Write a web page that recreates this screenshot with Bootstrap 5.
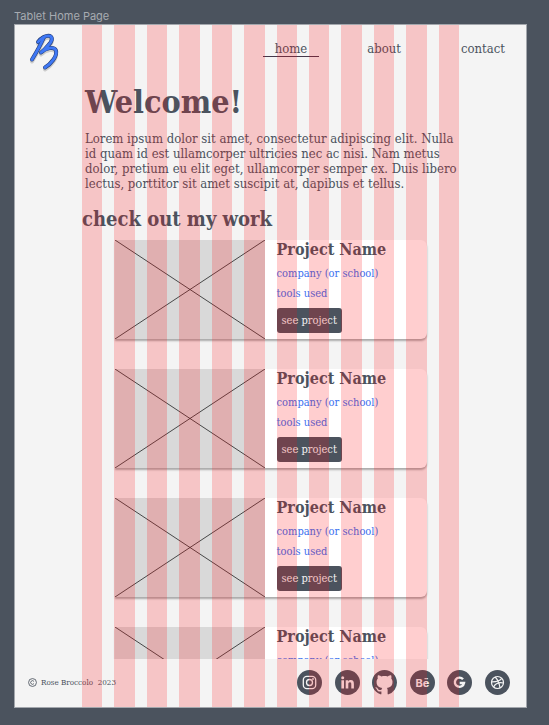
<!DOCTYPE html>
<html lang="en">
<head>
<meta charset="utf-8">
<meta name="viewport" content="width=device-width, initial-scale=1">
<title>Tablet Home Page</title>
<link href="https://cdn.jsdelivr.net/npm/bootstrap@5.3.0/dist/css/bootstrap.min.css" rel="stylesheet">
<style>
  :root { --slate: #4b535e; --paper: #f4f4f4; --accent: #3b6fef; }
  body { background: var(--slate); color: var(--slate); font-family: "DejaVu Serif Condensed", "DejaVu Serif", serif; font-size: 13px; padding: 8px 22px 17px 14px; }
  .frame-label { font: 11px/16px Inter, sans-serif; color: #a7abb1; }
  .frame { background: var(--paper); border: 1px solid #a3a7ad; min-height: 0; }
  .site-head { padding: 8px 9px 0 14px; }
  .site-nav { gap: 36px; padding-top: 8px; }
  .site-nav a { color: var(--slate); text-decoration: none; line-height: 15px; padding: 0 12px; border-bottom: 1px solid transparent; }
  .site-nav a.active { border-color: #45384c; }
  .intro { padding: 0 64px 0 70px; }
  h1 { font-size: 32px; line-height: 40px; margin: 9px 0; font-weight: 700; }
  .intro p { line-height: 15px; margin: 0; white-space: nowrap; }
  h2 { font-size: 20px; line-height: 26px; margin: 15px 0 0; padding-left: 67px; font-weight: 700; }
  .work-list { min-height: 0; overflow: hidden; padding-top: 8px; gap: 30px; }
  .project { width: 312px; min-height: 99px; background: #fff; border-radius: 0 6px 6px 0; box-shadow: 0 2px 2px rgba(0,0,0,.3); }
  .thumb { width: 150px; background: #d9d9d9; }
  .project-body { padding: 0 0 6px 12px; }
  h3 { font-size: 16px; line-height: 20px; margin: 0 0 4px; font-weight: 700; }
  .project-body p { color: var(--accent); font-size: 11px; line-height: 20px; margin: 0; }
  .see-btn { background: var(--slate); color: var(--paper); border: 0; border-radius: 3px; font-size: 11px; line-height: 25px; padding: 0 5px; margin-top: 4px; }
  .site-foot { padding: 11px 16px 12px 13px; font-size: 8px; }
  .socials { width: 213px; }
  .socials a { color: var(--slate); line-height: 0; }
  .columns { padding: 0 67px; gap: 12px; pointer-events: none; }
  .columns span { background: rgba(255, 8, 16, .2); flex: 1 1 0; }
</style>
<script src="https://cdn.jsdelivr.net/npm/bootstrap@5.3.0/dist/js/bootstrap.bundle.min.js" defer></script>
</head>
<body class="vh-100 d-flex flex-column overflow-hidden">
<div class="frame-label">Tablet Home Page</div>
<div class="frame position-relative d-flex flex-column flex-grow-1">
  <header class="site-head d-flex justify-content-between align-items-start">
    <a href="#" aria-label="Home">
      <svg class="d-block" width="32" height="40" viewBox="0 0 32 40" fill="none" stroke-linecap="round" stroke-linejoin="round">
        <defs><g id="mark-b"><path d="M14.500 5C12 11 7 20 3 26.500"/><path d="M9 9C12 5 17 2 21 3C24.500 5 22.500 9 19.500 12C17 15 14 18 12 19.500C17 15 25 13 27 17.500C28.500 23 22 31 16 34.500"/></g></defs>
        <use href="#mark-b" stroke="#000" stroke-opacity=".16" stroke-width="4" y="2"/>
        <use href="#mark-b" stroke="#26407c" stroke-width="4"/>
        <use href="#mark-b" stroke="#3f78f5" stroke-width="2.800"/>
      </svg>
    </a>
    <nav class="site-nav d-flex">
      <a class="active" href="#" aria-current="page">home</a>
      <a href="#">about</a>
      <a href="#">contact</a>
    </nav>
  </header>
  <section class="intro">
    <h1>Welcome!</h1>
    <p>Lorem ipsum dolor sit amet, consectetur adipiscing elit. Nulla<br>id quam id est ullamcorper ultricies nec ac nisi. Nam metus<br>dolor, pretium eu elit eget, ullamcorper semper ex. Duis libero<br>lectus, porttitor sit amet suscipit at, dapibus et tellus.</p>
  </section>
  <h2>check out my work</h2>
  <main class="work-list d-flex flex-column align-items-center flex-grow-1">
    <article class="project d-flex flex-shrink-0">
      <svg class="thumb" viewBox="0 0 150 99" preserveAspectRatio="none" stroke="#222" stroke-width=".8"><path d="M0 0L150 99M150 0L0 99"/></svg>
      <div class="project-body"><h3>Project Name</h3><p>company (or school)</p><p>tools used</p><button class="see-btn" type="button">see project</button></div>
    </article>
    <article class="project d-flex flex-shrink-0">
      <svg class="thumb" viewBox="0 0 150 99" preserveAspectRatio="none" stroke="#222" stroke-width=".8"><path d="M0 0L150 99M150 0L0 99"/></svg>
      <div class="project-body"><h3>Project Name</h3><p>company (or school)</p><p>tools used</p><button class="see-btn" type="button">see project</button></div>
    </article>
    <article class="project d-flex flex-shrink-0">
      <svg class="thumb" viewBox="0 0 150 99" preserveAspectRatio="none" stroke="#222" stroke-width=".8"><path d="M0 0L150 99M150 0L0 99"/></svg>
      <div class="project-body"><h3>Project Name</h3><p>company (or school)</p><p>tools used</p><button class="see-btn" type="button">see project</button></div>
    </article>
    <article class="project d-flex flex-shrink-0">
      <svg class="thumb" viewBox="0 0 150 99" preserveAspectRatio="none" stroke="#222" stroke-width=".8"><path d="M0 0L150 99M150 0L0 99"/></svg>
      <div class="project-body"><h3>Project Name</h3><p>company (or school)</p></div>
    </article>
  </main>
  <footer class="site-foot d-flex justify-content-between align-items-center">
    <div class="d-flex align-items-center gap-1">
      <svg width="9" height="9" viewBox="0 0 16 16" fill="none" stroke="currentColor" stroke-width="1.500" role="img" aria-label="Copyright"><circle cx="8" cy="8" r="7"/><path d="M10.500 6A3.200 3.200 0 1 0 10.500 10"/></svg>
      <span>Rose Broccolo &nbsp;2023</span>
    </div>
    <div class="socials d-flex justify-content-between">
      <a href="#" aria-label="Instagram"><svg width="25" height="25" viewBox="0 0 25 25"><circle cx="12.500" cy="12.500" r="12.500" fill="currentColor"/><g fill="none" stroke="#f4f4f4" stroke-width="1.300"><rect x="6.300" y="6.300" width="12.400" height="12.400" rx="3.600"/><circle cx="12.500" cy="12.500" r="3"/></g><circle cx="16" cy="9" r=".9" fill="#f4f4f4"/></svg></a>
      <a href="#" aria-label="LinkedIn"><svg width="25" height="25" viewBox="0 0 25 25"><circle cx="12.500" cy="12.500" r="12.500" fill="currentColor"/><g fill="#f4f4f4"><circle cx="7.700" cy="7.800" r="1.500"/><path d="M6.400 10.300h2.600v8.200H6.400zM10.700 10.300h2.500v1.200c.6-.9 1.500-1.400 2.600-1.400 2.400 0 3.100 1.500 3.100 3.800v4.600h-2.600v-4.100c0-1.200-.2-2.100-1.400-2.100s-1.600.9-1.600 2.100v4.100h-2.600z"/></g></svg></a>
      <a href="#" aria-label="GitHub"><svg width="25" height="25" viewBox="0 0 16 16" fill="currentColor"><path d="M8 0C3.580 0 0 3.580 0 8c0 3.540 2.290 6.530 5.470 7.590.4.070.55-.17.55-.38 0-.19-.01-.82-.01-1.490-2.010.37-2.530-.49-2.690-.94-.09-.23-.48-.94-.82-1.130-.28-.15-.68-.52-.01-.53.63-.01 1.080.58 1.230.82.72 1.210 1.870.87 2.330.66.070-.52.280-.87.510-1.070-1.780-.2-3.640-.89-3.640-3.950 0-.87.310-1.590.820-2.150-.08-.2-.36-1.020.08-2.120 0 0 .67-.21 2.200.82.640-.18 1.320-.27 2-.27s1.360.09 2 .27c1.530-1.040 2.200-.82 2.200-.82.440 1.100.160 1.920.080 2.120.510.560.820 1.270.820 2.150 0 3.070-1.870 3.750-3.650 3.950.290.250.540.730.540 1.480 0 1.070-.01 1.930-.01 2.200 0 .210.150.460.550.380A8.010 8.010 0 0 0 16 8c0-4.420-3.580-8-8-8z"/></svg></a>
      <a href="#" aria-label="Behance"><svg width="25" height="25" viewBox="0 0 25 25"><circle cx="12.500" cy="12.500" r="12.500" fill="currentColor"/><text x="12.500" y="16.500" text-anchor="middle" font-family="Inter, sans-serif" font-weight="700" font-size="11" fill="#f4f4f4">Be</text><path d="M14.500 8.700h3.600" stroke="#f4f4f4"/></svg></a>
      <a href="#" aria-label="Google"><svg width="25" height="25" viewBox="0 0 25 25"><circle cx="12.500" cy="12.500" r="12.500" fill="currentColor"/><path d="M16 9.300A4.600 4.600 0 1 0 17 13H12.700" fill="none" stroke="#f4f4f4" stroke-width="2.400"/></svg></a>
      <a href="#" aria-label="Dribbble"><svg width="25" height="25" viewBox="0 0 25 25"><circle cx="12.500" cy="12.500" r="12.500" fill="currentColor"/><g fill="none" stroke="#f4f4f4" stroke-width="1.200"><circle cx="12.500" cy="12.500" r="6"/><path d="M10.200 7C13 10 14.500 14 15 17.900M6.500 11.800C11 12 14.500 11 16.800 8.300M8.600 17C10.500 13.500 14 12 18.500 13"/></g></svg></a>
    </div>
  </footer>
  <div class="columns position-absolute top-0 bottom-0 start-0 end-0 d-flex" aria-hidden="true"><span></span><span></span><span></span><span></span><span></span><span></span><span></span><span></span><span></span><span></span><span></span><span></span></div>
</div>
</body>
</html>
